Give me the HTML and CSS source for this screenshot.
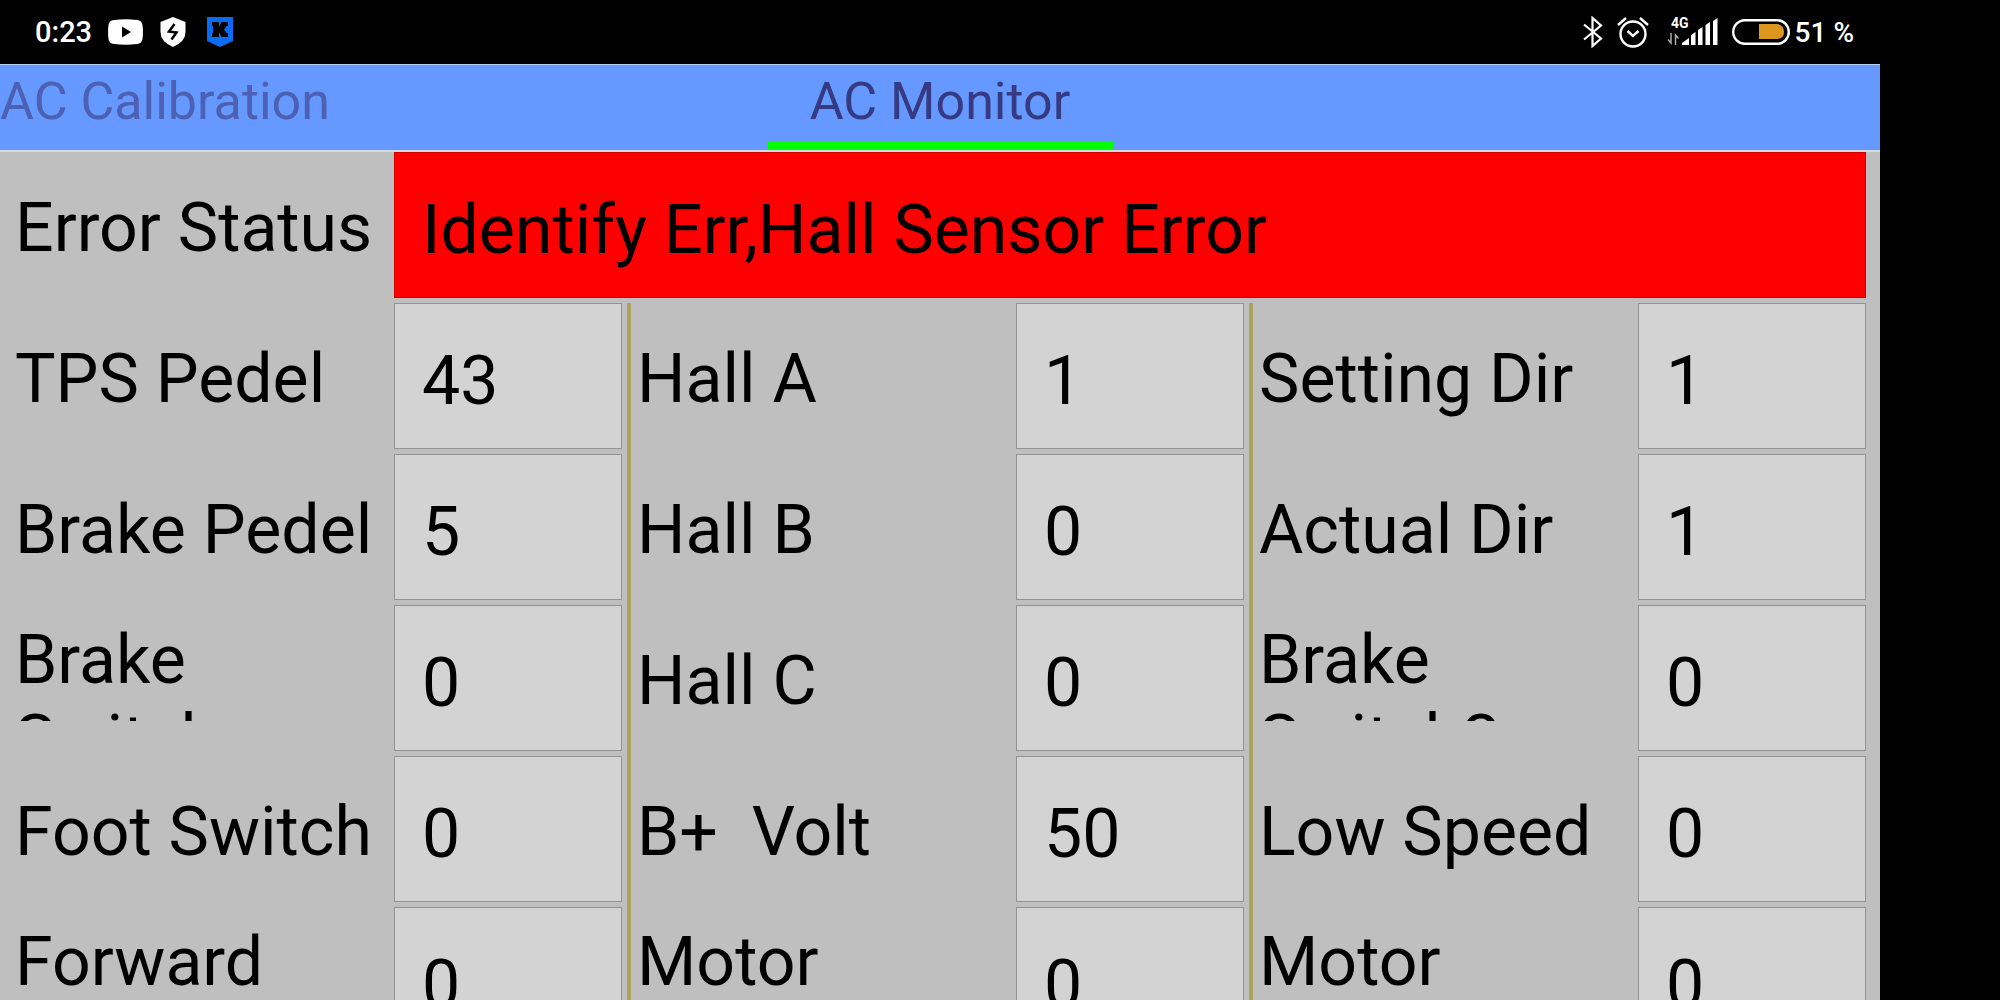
FILE: index.html
```html
<!DOCTYPE html>
<html lang="en">
<head>
  <meta charset="UTF-8" />
  <meta name="viewport" content="width=device-width, initial-scale=1.0"/>
  <title>AC Monitor</title>
  <link rel="stylesheet" href="styles.css">
</head>
<body>
  <div class="screen">
    <header class="status-bar">
      <div class="status-left">
        <span class="clock">0:23</span>
        <svg class="youtube" width="35" height="26" viewBox="0 0 35 26">
          <path d="M6 1 Q17.500 -.6 29 1 Q34 1.500 34.500 6 Q35.400 13 34.500 20 Q34 24.500 29 25 Q17.500 26.600 6 25 Q1 24.500 .5 20 Q-.4 13 .5 6 Q1 1.500 6 1Z" fill="#fff"/>
          <path d="M14 7.500 L23 13 L14 18.500Z" fill="#000"/>
        </svg>
        <svg class="shield" width="26" height="30" viewBox="0 0 26 30">
          <path d="M13 0 L25.500 5 V15 Q25.500 24.500 13 30 Q.5 24.500 .5 15 V5Z" fill="#fff"/>
          <path d="M14.500 7 L9 14.500 L16.500 15.500 L11.500 22.500" fill="none" stroke="#000" stroke-width="2.500"/>
        </svg>
        <svg width="26" height="30" viewBox="0 0 26 30">
          <path d="M0 0 H26 V24 L13 30 L0 24Z" fill="#0a6cf5"/>
          <path d="M5 5 H12 V10 L14.500 5 H21 V9 H19.500 L17 12.500 L19.500 16 H21 V20 H14.500 L12 15 V20 H5 V16 H6 V9 H5Z" fill="#000"/>
        </svg>
      </div>
      <div class="status-right">
        <svg class="bluetooth" width="20" height="32" viewBox="0 0 20 32">
          <path d="M1 8.500 L18 22.500 L9.500 30 V2 L18 9.500 L1 23.500" fill="none" stroke="#fff" stroke-width="2.200"/>
        </svg>
        <svg class="alarm" width="32" height="32" viewBox="0 0 32 32" fill="none" stroke="#fff" stroke-width="2.400">
          <circle cx="16" cy="18" r="12.500"/>
          <path d="M1 9 L9 2 M31 9 L23 2 M10.500 15 L16 20 L21.500 15"/>
        </svg>
        <svg class="signal" width="52" height="30" viewBox="0 0 52 30" fill="#fff">
          <text class="network" x="4" y="11">4G</text>
          <path d="M4 16 V26 L1 22.500 M8.500 28 V18 L11.500 21.500" fill="none" stroke="#aaa" stroke-width="1.500"/>
          <path d="M15 28 V26 L22 21 V28Z M24 28 V18 L28.500 15 V28Z M31 28 V13 L35.500 10 V28Z M38.500 28 V8 L43 5 V28Z M46 28 V4 L50.500 1 V28Z"/>
        </svg>
        <svg class="battery" width="58" height="26" viewBox="0 0 58 26">
          <rect x="1.200" y="1.200" width="55.600" height="23.600" rx="11.800" fill="none" stroke="#fff" stroke-width="2.400"/>
          <path d="M27 5 H45 Q52 6 52 13 Q52 20 45 20 H27Z" fill="#dd961e"/>
        </svg>
        <span class="percent">51 %</span>
      </div>
    </header>

    <nav class="tabs">
      <a class="tab" href="#calibration">AC Calibration</a>
      <a class="tab active" href="#monitor">AC Monitor</a>
    </nav>

    <main class="monitor">
      <label for="error"><span>Error Status</span></label>
      <input class="error" id="error" value="Identify Err,Hall Sensor Error" readonly>

      <label for="tps"><span>TPS Pedel</span></label>
      <input id="tps" value="43" readonly>
      <label class="divided" for="hallA"><span>Hall A</span></label>
      <input id="hallA" value="1" readonly>
      <label class="divided" for="settingDir"><span>Setting Dir</span></label>
      <input id="settingDir" value="1" readonly>

      <label for="brake"><span>Brake Pedel</span></label>
      <input id="brake" value="5" readonly>
      <label class="divided" for="hallB"><span>Hall B</span></label>
      <input id="hallB" value="0" readonly>
      <label class="divided" for="actualDir"><span>Actual Dir</span></label>
      <input id="actualDir" value="1" readonly>

      <label for="brakeSwitch"><span>Brake Switch</span></label>
      <input id="brakeSwitch" value="0" readonly>
      <label class="divided" for="hallC"><span>Hall C</span></label>
      <input id="hallC" value="0" readonly>
      <label class="divided" for="brakeSwitch2"><span>Brake Switch2</span></label>
      <input id="brakeSwitch2" value="0" readonly>

      <label for="footSwitch"><span>Foot Switch</span></label>
      <input id="footSwitch" value="0" readonly>
      <label class="divided" for="volt"><span>B+  Volt</span></label>
      <input id="volt" value="50" readonly>
      <label class="divided" for="lowSpeed"><span>Low Speed</span></label>
      <input id="lowSpeed" value="0" readonly>

      <label for="forward"><span>Forward Switch</span></label>
      <input id="forward" value="0" readonly>
      <label class="divided" for="motorCurrent"><span>Motor Current</span></label>
      <input id="motorCurrent" value="0" readonly>
      <label class="divided" for="motorTemp"><span>Motor Temperature</span></label>
      <input id="motorTemp" value="0" readonly>
    </main>
  </div>
</body>
</html>
```
FILE: styles.css
```css
* {
  box-sizing: border-box;
}

body {
  margin: 0;
  height: 100vh;
  overflow: hidden;
  background: #000;
  color: #000;
  font-family: Roboto, "Liberation Sans", sans-serif;
}

.screen {
  margin-right: 6%;
  background: #bfbfbf;
}

/* status bar */
.status-bar {
  display: flex;
  justify-content: space-between;
  height: 64px;
  padding: 0 26px 0 35px;
  background: #000;
  color: #fff;
}

.status-left, .status-right {
  display: flex;
  align-items: center;
}

.clock {
  font-size: 29px;
  font-weight: 500;
}

.percent {
  font-size: 28px;
  font-weight: 500;
}

.youtube {
  margin: 0 17px 0 16px;
}

.shield {
  margin-right: 21px;
}

.bluetooth {
  margin-right: 14px;
}

.alarm {
  margin-right: 18px;
}

.signal {
  margin-right: 13px;
  overflow: visible;
}

.network {
  font-size: 14px;
  font-weight: 700;
}

.battery {
  margin-right: 5px;
}

/* tabs */
.tabs {
  display: grid;
  grid-template-columns: 1fr auto 1fr;
  height: 88px;
  background: #6699ff;
  border-top: 1px solid #b5d0f5;
  border-bottom: 2px solid #d2dcdc;
}

.tab {
  padding-top: 7px;
  font-size: 52px;
  line-height: 60px;
  color: #4c60b4;
  text-decoration: none;
}

.tab.active {
  padding: 7px 43px 0;
  color: #363a82;
  border-bottom: 8px solid #00ff00;
}

/* readings */
.monitor {
  display: grid;
  grid-template-columns: repeat(3, minmax(0, 389fr) minmax(0, 233fr));
  grid-auto-rows: 151px;
  padding: 0 9px 0 5px;
}

label {
  display: flex;
  align-items: flex-end;
  padding: 0 12px 35px 6px;
  border-left: 4px solid transparent;
  font-size: 68px;
  line-height: 80px;
}

label.divided {
  border-left-color: #aaa55c;
}

label span {
  max-height: 101px;
  overflow: hidden;
  white-space: pre-wrap;
}

input {
  min-width: 0;
  margin: 0 5px 5px 0;
  padding: 9px 0 0 27px;
  border: 1px solid #929292;
  border-radius: 0;
  background: #d3d3d3;
  color: #000;
  font-family: inherit;
  font-size: 68px;
  outline: none;
}

input.error {
  grid-column: span 5;
  background: #ff0000;
  border-color: #d00000;
}
```
